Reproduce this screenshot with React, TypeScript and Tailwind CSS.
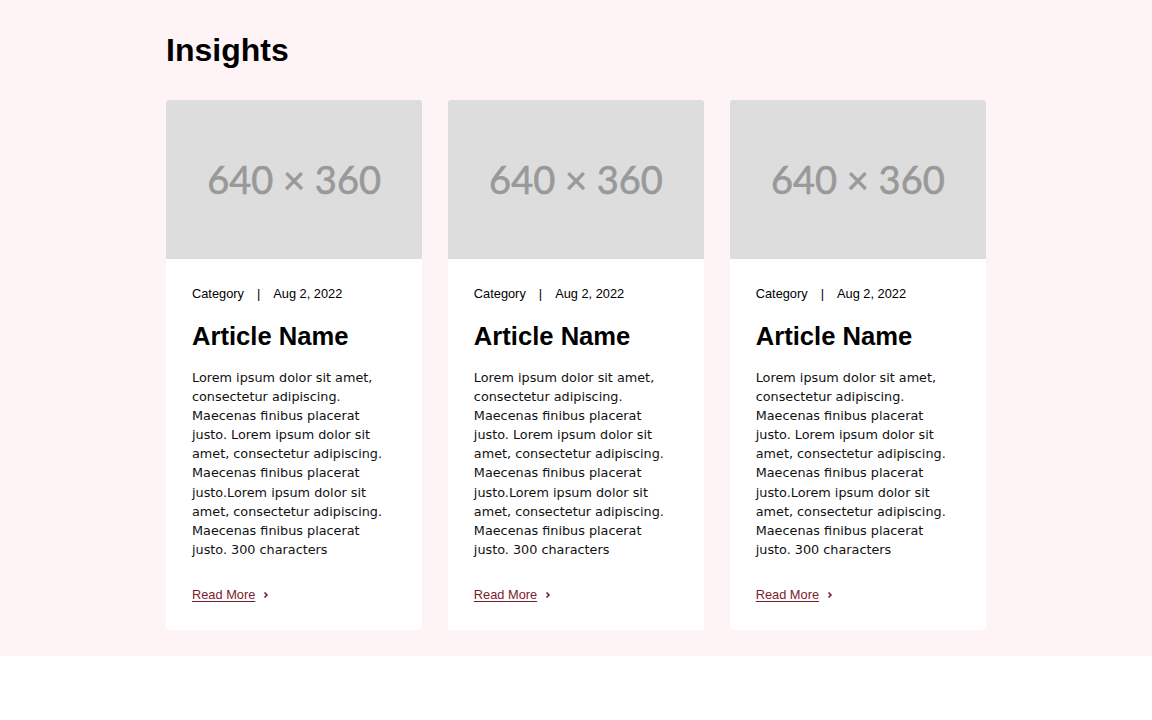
const articles = [1, 2, 3].map((id) => ({
  id,
  category: "Category",
  date: "Aug 2, 2022",
  title: "Article Name",
  body: "Lorem ipsum dolor sit amet, consectetur adipiscing. Maecenas finibus placerat justo. Lorem ipsum dolor sit amet, consectetur adipiscing. Maecenas finibus placerat justo.Lorem ipsum dolor sit amet, consectetur adipiscing. Maecenas finibus placerat justo. 300 characters",
}));

function ArticleCard({ article }: { article: (typeof articles)[number] }) {
  return (
    <div className="bg-white rounded-[3px] overflow-hidden flex flex-col">
      <div className="h-[159px] bg-[#dddddd] flex items-center justify-center">
        <span className="font-['Lato',sans-serif] text-[38px] text-[#999999] [-webkit-text-stroke:0.6px_#999999]">
          640 × 360
        </span>
      </div>
      <div className="px-[26px] pt-[27px] pb-[24px] font-['Liberation_Sans',Arial,sans-serif]">
        <p className="text-[12.8px] leading-4 text-black">
          {article.category}
          <span className="mx-[13px]">|</span>
          {article.date}
        </p>
        <h2 className="mt-[19px] text-[25.6px] leading-[31px] font-bold text-black">
          {article.title}
        </h2>
        <p className="mt-4 font-['DejaVu_Sans',sans-serif] text-[12.8px] leading-[19.1px] text-[#111]">
          {article.body}
        </p>
        <a
          href="#"
          className="mt-[28px] inline-flex items-center gap-2 text-[12.8px] leading-4 text-[#7a1c2c]"
        >
          <span className="underline underline-offset-2">Read More</span>
          <svg width="6" height="8" viewBox="0 0 6 8" fill="none">
            <path d="M1.5 1.5 L4 4 L1.5 6.5" stroke="#7a1c2c" strokeWidth="1.6" />
          </svg>
        </a>
      </div>
    </div>
  );
}

export default function App() {
  return (
    <div className="min-h-[720px] bg-white">
      <section className="bg-[#fff4f5] pt-[28px] pb-[26px]">
        <div className="w-[820px] mx-auto">
          <h1 className="font-['Liberation_Sans',Arial,sans-serif] text-[32px] leading-[44px] font-bold text-black">
            Insights
          </h1>
          <div className="mt-[28px] grid grid-cols-3 gap-[25.6px]">
            {articles.map((a) => (
              <ArticleCard key={a.id} article={a} />
            ))}
          </div>
        </div>
      </section>
    </div>
  );
}
